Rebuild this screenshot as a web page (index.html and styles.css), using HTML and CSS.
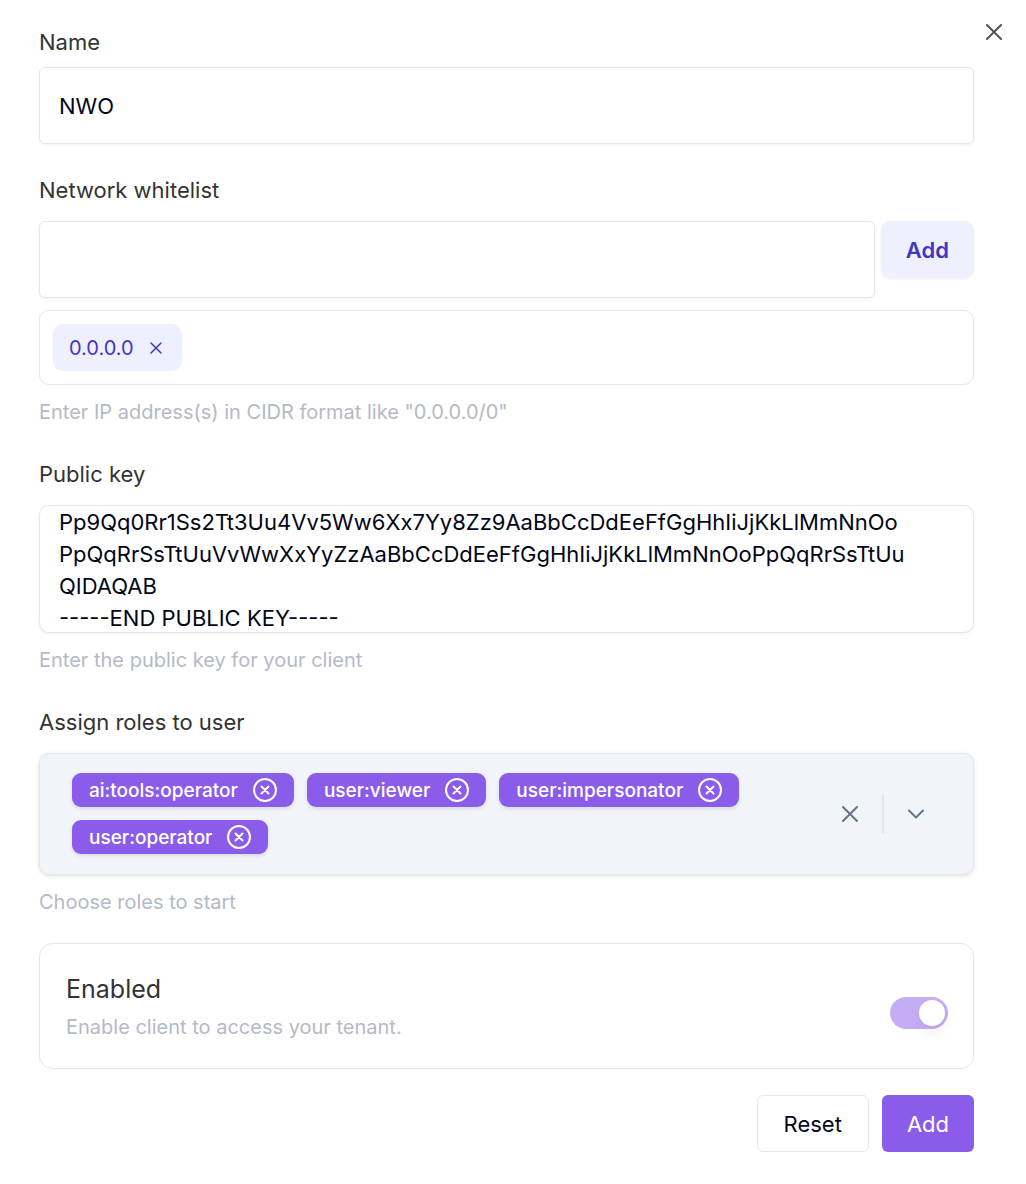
FILE: index.html
```
<!DOCTYPE html>
<html lang="en">

<head>
  <meta charset="UTF-8" />
  <meta name="viewport" content="width=device-width, initial-scale=1.0" />
  <title>Add client</title>
  <link rel="stylesheet" href="styles.css">
</head>

<body>
  <button type="button" class="close" aria-label="Close">
    <svg width="16" height="16" viewBox="0 0 16 16"><path d="M1 1l14 14M15 1L1 15" /></svg>
  </button>

  <form class="client-form">
    <div class="field field-name">
      <label for="name">Name</label>
      <input type="text" id="name" class="control" value="NWO">
    </div>

    <div class="field">
      <label for="network">Network whitelist</label>
      <div class="network-row">
        <input type="text" id="network" class="control">
        <button type="button" class="btn btn-soft">Add</button>
      </div>
      <div class="tag-box">
        <button type="button" class="tag">
          0.0.0.0
          <svg width="12" height="12" viewBox="0 0 12 12"><path d="M1 1l10 10M11 1L1 11" /></svg>
        </button>
      </div>
      <p class="hint">Enter IP address(s) in CIDR format like "0.0.0.0/0"</p>
    </div>

    <div class="field">
      <label for="publicKey">Public key</label>
      <textarea id="publicKey" class="control" spellcheck="false">Pp9Qq0Rr1Ss2Tt3Uu4Vv5Ww6Xx7Yy8Zz9AaBbCcDdEeFfGgHhIiJjKkLlMmNnOo
PpQqRrSsTtUuVvWwXxYyZzAaBbCcDdEeFfGgHhIiJjKkLlMmNnOoPpQqRrSsTtUu
QIDAQAB
-----END PUBLIC KEY-----</textarea>
      <p class="hint">Enter the public key for your client</p>
    </div>

    <div class="field field-roles">
      <label id="rolesLabel">Assign roles to user</label>
      <div class="roles" role="group" aria-labelledby="rolesLabel">
        <div class="role-list">
          <button type="button" class="role">ai:tools:operator
            <svg width="24" height="24" viewBox="0 0 24 24"><circle cx="12" cy="12" r="11" /><path d="M8.5 8.5l7 7M15.5 8.5l-7 7" /></svg>
          </button>
          <button type="button" class="role">user:viewer
            <svg width="24" height="24" viewBox="0 0 24 24"><circle cx="12" cy="12" r="11" /><path d="M8.5 8.5l7 7M15.5 8.5l-7 7" /></svg>
          </button>
          <button type="button" class="role">user:impersonator
            <svg width="24" height="24" viewBox="0 0 24 24"><circle cx="12" cy="12" r="11" /><path d="M8.5 8.5l7 7M15.5 8.5l-7 7" /></svg>
          </button>
          <button type="button" class="role">user:operator
            <svg width="24" height="24" viewBox="0 0 24 24"><circle cx="12" cy="12" r="11" /><path d="M8.5 8.5l7 7M15.5 8.5l-7 7" /></svg>
          </button>
        </div>
        <div class="indicators">
          <button type="button" aria-label="Clear roles">
            <svg width="16" height="16" viewBox="0 0 16 16"><path d="M1 1l14 14M15 1L1 15" /></svg>
          </button>
          <span class="separator"></span>
          <button type="button" aria-label="Show roles">
            <svg width="16" height="16" viewBox="0 0 16 16"><path d="M1 4.5l7 7 7-7" /></svg>
          </button>
        </div>
      </div>
      <p class="hint">Choose roles to start</p>
    </div>

    <div class="card">
      <div>
        <label for="enabled">Enabled</label>
        <p class="hint">Enable client to access your tenant.</p>
      </div>
      <input type="checkbox" id="enabled" class="switch" role="switch" checked disabled>
    </div>

    <div class="actions">
      <button type="reset" class="btn btn-outline">Reset</button>
      <button type="submit" class="btn btn-primary">Add</button>
    </div>
  </form>
</body>

</html>
```

FILE: styles.css
```
* {
  box-sizing: border-box;
}

body {
  margin: 0;
  background: #fff;
  color: #020617;
  font-family: Inter, "Liberation Sans", sans-serif;
  font-size: 22px;
}

button,
input,
textarea {
  margin: 0;
  font: inherit;
  color: inherit;
}

button {
  padding: 0;
  border: none;
  background: none;
  cursor: pointer;
}

svg {
  display: block;
  flex: none;
  fill: none;
  stroke: currentColor;
  stroke-width: 2;
  stroke-linecap: round;
  stroke-linejoin: round;
}

.close {
  position: absolute;
  top: 20px;
  right: 20px;
  padding: 4px;
  color: #52525b;
}

.client-form {
  padding: 27px 52px 32px 39px;
}

.field {
  margin-bottom: 33px;
}

label {
  display: block;
  margin-bottom: 16px;
  line-height: 30px;
  color: #333;
}

.field-name {
  margin-bottom: 31px;
}

.field-name label {
  margin-bottom: 10px;
}

.field-roles {
  margin-bottom: 27px;
}

.control {
  display: block;
  width: 100%;
  height: 77px;
  padding: 0 19px;
  border: 1px solid #e2e8f0;
  border-radius: 6px;
  background: #fff;
  box-shadow: 0 1px 3px rgba(0, 0, 0, 0.06);
}

textarea.control {
  height: 128px;
  border-radius: 10px;
  line-height: 32px;
  resize: none;
  overflow: hidden;
}

.hint {
  margin: 13px 0 0;
  font-size: 20px;
  line-height: 28px;
  color: #b4bac7;
}

/* network whitelist */
.network-row {
  display: flex;
  align-items: flex-start;
  gap: 6px;
  margin-bottom: 12px;
}

.network-row .control {
  flex: 1;
  min-width: 0;
}

.btn {
  height: 57px;
  padding: 0 25px;
  border-radius: 6px;
}

.btn-soft {
  border-radius: 10px;
  background: #eef0ff;
  color: #4335c4;
  font-weight: 600;
  box-shadow: 0 1px 3px rgba(0, 0, 0, 0.08);
}

.tag-box {
  display: flex;
  padding: 13px;
  border: 1px solid #e2e8f0;
  border-radius: 10px;
}

.tag {
  display: flex;
  align-items: center;
  gap: 16px;
  height: 47px;
  padding: 0 20px 0 16px;
  border-radius: 10px;
  background: #eef0ff;
  color: #4335c4;
  font-size: 20px;
}

.tag svg {
  stroke-width: 1.5;
}

/* roles */
.roles {
  display: flex;
  align-items: center;
  padding: 19px 49px 20px 32px;
  border: 1px solid #e2e8f0;
  border-radius: 10px;
  background: #f1f5f9;
  box-shadow: 0 1px 4px rgba(0, 0, 0, 0.12);
}

.role-list {
  display: flex;
  flex: 1;
  flex-wrap: wrap;
  gap: 13px;
}

.role {
  display: flex;
  align-items: center;
  gap: 15px;
  height: 34px;
  padding: 0 17px;
  border-radius: 9px;
  background: #8b5cea;
  color: #fff;
  font-size: 19px;
  font-weight: 500;
  box-shadow: 0 2px 4px rgba(0, 0, 0, 0.1);
}

.indicators {
  display: flex;
  align-items: center;
  gap: 24px;
  color: #64748b;
}

.separator {
  width: 2px;
  height: 38px;
  background: #e2e4e9;
}

/* enabled */
.card {
  display: flex;
  align-items: center;
  justify-content: space-between;
  margin-bottom: 26px;
  padding: 29px 25px 27px 26px;
  border: 1px solid #e4e4ed;
  border-radius: 13px;
}

.card label {
  margin: 0;
  font-size: 25px;
  line-height: 32px;
}

.card .hint {
  margin-top: 8px;
}

.switch {
  display: flex;
  align-items: center;
  justify-content: flex-end;
  width: 58px;
  height: 32px;
  margin-top: 12px;
  padding: 3px;
  border-radius: 16px;
  background: #c5adf4;
  appearance: none;
}

.switch::before {
  content: "";
  width: 26px;
  height: 26px;
  border-radius: 50%;
  background: #fff;
  box-shadow: 0 8px 12px rgba(0, 0, 0, 0.05);
}

.actions {
  display: flex;
  justify-content: flex-end;
  gap: 13px;
}

.btn-outline {
  padding: 0 26px;
  border: 1px solid #e2e8f0;
  background: #fff;
}

.btn-primary {
  background: #8b5cea;
  color: #fff;
}
```
